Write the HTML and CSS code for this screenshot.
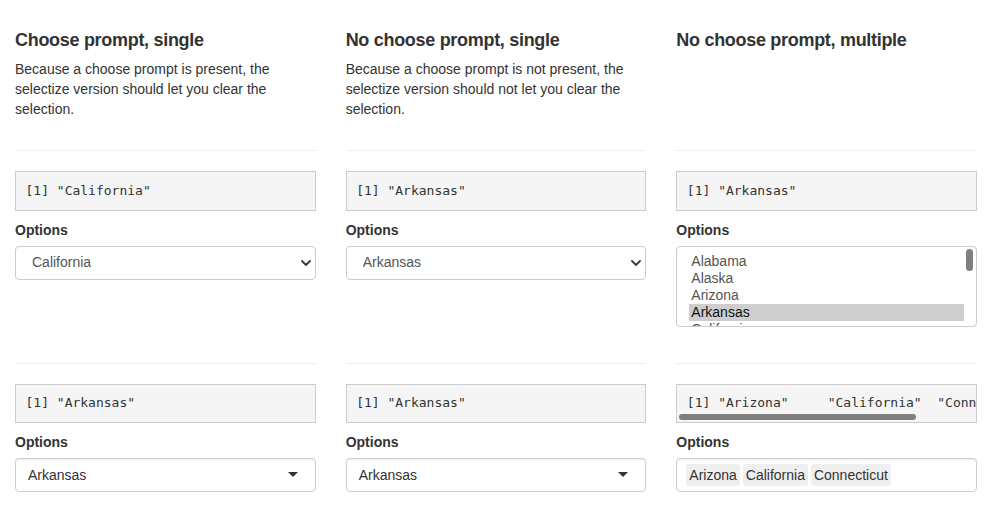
FILE: index.html
```html
<!DOCTYPE html>
<html lang="en">
<head>
<meta charset="utf-8">
<title>Select inputs</title>
<link rel="stylesheet" href="styles.css">
</head>
<body>
<div class="page">
  <div class="grid">
    <section class="cell">
      <h3 class="title">Choose prompt, single</h3>
      <p class="desc">Because a choose prompt is present, the selectize version should let you clear the selection.</p>
    </section>
    <section class="cell">
      <h3 class="title">No choose prompt, single</h3>
      <p class="desc">Because a choose prompt is not present, the selectize version should not let you clear the selection.</p>
    </section>
    <section class="cell">
      <h3 class="title">No choose prompt, multiple</h3>
    </section>

    <section class="cell">
      <hr class="sep">
      <pre class="output">[1] "California"</pre>
      <div class="form-group">
        <label class="control-label">Options</label>
        <div class="select-wrap">
          <select class="form-control native">
            <option>California</option>
          </select>
          <svg class="chevron" width="10" height="6" viewBox="0 0 10 6" aria-hidden="true"><path d="M1 1 L5 5 L9 1" fill="none" stroke="#3a3a3a" stroke-width="1.8" stroke-linecap="round" stroke-linejoin="round"/></svg>
        </div>
      </div>
    </section>
    <section class="cell">
      <hr class="sep">
      <pre class="output">[1] "Arkansas"</pre>
      <div class="form-group">
        <label class="control-label">Options</label>
        <div class="select-wrap">
          <select class="form-control native">
            <option>Arkansas</option>
          </select>
          <svg class="chevron" width="10" height="6" viewBox="0 0 10 6" aria-hidden="true"><path d="M1 1 L5 5 L9 1" fill="none" stroke="#3a3a3a" stroke-width="1.8" stroke-linecap="round" stroke-linejoin="round"/></svg>
        </div>
      </div>
    </section>
    <section class="cell">
      <hr class="sep">
      <pre class="output">[1] "Arkansas"</pre>
      <div class="form-group">
        <label class="control-label">Options</label>
        <div class="listbox" role="listbox">
          <div class="opt">Alabama</div>
          <div class="opt">Alaska</div>
          <div class="opt">Arizona</div>
          <div class="opt selected">Arkansas</div>
          <div class="opt">California</div>
          <span class="vthumb"></span>
        </div>
      </div>
    </section>

    <section class="cell">
      <hr class="sep">
      <pre class="output">[1] "Arkansas"</pre>
      <div class="form-group">
        <label class="control-label">Options</label>
        <div class="selectize single"><span class="item">Arkansas</span></div>
      </div>
    </section>
    <section class="cell">
      <hr class="sep">
      <pre class="output">[1] "Arkansas"</pre>
      <div class="form-group">
        <label class="control-label">Options</label>
        <div class="selectize single"><span class="item">Arkansas</span></div>
      </div>
    </section>
    <section class="cell">
      <hr class="sep">
      <pre class="output scroll">[1] "Arizona"     "California"  "Connecticut"<span class="hthumb"></span></pre>
      <div class="form-group">
        <label class="control-label">Options</label>
        <div class="selectize multi">
          <span class="chip">Arizona</span><span class="chip">California</span><span class="chip">Connecticut</span>
        </div>
      </div>
    </section>
  </div>
</div>
</body>
</html>
```

FILE: styles.css
```css
* { box-sizing: border-box; }

html, body {
  margin: 0;
  padding: 0;
  background: #fff;
}

body {
  font-family: "Liberation Sans", Arial, sans-serif;
  font-size: 14px;
  line-height: 1.42857;
  color: #333;
}

.grid {
  display: grid;
  grid-template-columns: repeat(3, minmax(0, 1fr));
  column-gap: 30px;
  padding: 0 15px;
}

.cell {
  min-width: 0;
}

.title {
  margin: 30.5px 0 10px;
  font-size: 18px;
  font-weight: 700;
  line-height: 1.1;
  letter-spacing: -0.3px;
  color: #333;
}

.desc {
  margin: 0 0 10px;
}

.sep {
  margin: 20px 0;
  border: 0;
  border-top: 1px solid #eee;
  height: 0;
}

.output {
  position: relative;
  margin: 0 0 10px;
  padding: 9.5px;
  font-family: "DejaVu Sans Mono", "Liberation Mono", monospace;
  font-size: 13px;
  line-height: 1.42857;
  color: #333;
  background: #f5f5f5;
  border: 1px solid #ccc;
  border-radius: 0;
  white-space: pre;
  overflow: hidden;
}

.hthumb {
  position: absolute;
  left: 2px;
  bottom: 2px;
  width: 237px;
  height: 6px;
  border-radius: 3px;
  background: #7f7f7f;
}

.form-group {
  margin-bottom: 16px;
}

.control-label {
  display: inline-block;
  margin-bottom: 5px;
  font-weight: 700;
}

.select-wrap {
  position: relative;
}

.form-control {
  display: block;
  width: 100%;
  height: 34px;
  padding: 6px 12px;
  font-family: inherit;
  font-size: 14px;
  line-height: 1.42857;
  color: #555;
  background: #fff;
  border: 1px solid #ccc;
  border-radius: 4px;
}

.native {
  appearance: none;
  -webkit-appearance: none;
  padding-left: 16px;
  margin: 0;
}

.chevron {
  position: absolute;
  right: 5px;
  top: 14px;
  pointer-events: none;
}

.listbox {
  position: relative;
  height: 81px;
  padding: 6px 12px;
  border: 1px solid #ccc;
  border-radius: 4px;
  background: #fff;
  overflow: hidden;
  color: #555;
}

.opt {
  padding: 0 2px 1px;
  line-height: 16px;
  white-space: nowrap;
}

.opt.selected {
  background: #cecece;
  color: #111;
}

.vthumb {
  position: absolute;
  top: 2px;
  right: 3px;
  width: 7px;
  height: 22px;
  border-radius: 4px;
  background: #808080;
}

.selectize {
  position: relative;
  min-height: 34px;
  border: 1px solid #ccc;
  border-radius: 4px;
  background: #fff;
  box-shadow: inset 0 1px 1px rgba(0, 0, 0, 0.075);
  color: #333;
  line-height: 20px;
}

.selectize.single {
  padding: 6px 12px;
}

.selectize.single::after {
  content: "";
  position: absolute;
  right: 17px;
  top: 50%;
  margin-top: -3px;
  width: 0;
  height: 0;
  border-style: solid;
  border-width: 5px 5px 0;
  border-color: #333 transparent transparent;
}

.selectize.multi {
  display: flex;
  flex-wrap: wrap;
  padding: 5px 9px 2px;
}

.chip {
  display: block;
  padding: 1px 3px;
  margin: 0 3px 3px 0;
  background: #efefef;
  border-radius: 3px;
  color: #333;
}
```
